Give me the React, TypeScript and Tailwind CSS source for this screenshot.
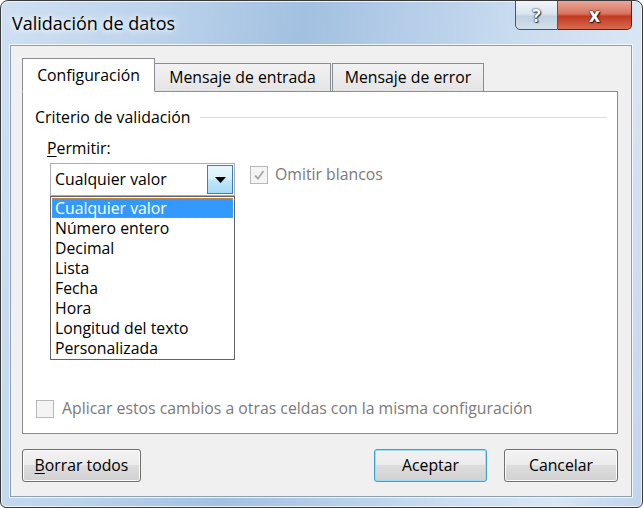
const FONT = "font-['Segoe_UI','Open_Sans','Noto_Sans',sans-serif]";

const ITEMS = [
  "Cualquier valor",
  "Número entero",
  "Decimal",
  "Lista",
  "Fecha",
  "Hora",
  "Longitud del texto",
  "Personalizada",
];

function CheckBox({ checked }: { checked?: boolean }) {
  return (
    <span className="flex h-[18px] w-[18px] shrink-0 items-center justify-center border border-[#b7b7b7] bg-[#f4f4f4]">
      {checked && (
        <svg width="12" height="12" viewBox="0 0 12 12">
          <path d="M2 6.5 L5 9.5 L10.5 2" fill="none" stroke="#a8a8a8" strokeWidth="1.8" />
        </svg>
      )}
    </span>
  );
}

function WinButton({
  children,
  primary,
  className,
}: {
  children: React.ReactNode;
  primary?: boolean;
  className?: string;
}) {
  return (
    <button
      className={
        "flex h-[33px] items-center justify-center rounded-[3px] border text-[15.8px] text-black bg-[linear-gradient(#f3f3f3_0%,#ebebeb_50%,#dddddd_50%,#d1d1d1_100%)] " +
        (primary
          ? "border-[#3c9fd6] shadow-[inset_0_0_0_1px_#9fdcf7] "
          : "border-[#707070] shadow-[inset_0_0_0_1px_#fcfcfc] ") +
        (className ?? "")
      }
    >
      {children}
    </button>
  );
}

export default function App() {
  return (
    <div
      className={`${FONT} flex h-[508px] w-[643px] flex-col overflow-hidden rounded-t-[8px] rounded-b-[6px] border border-[#3a3a3a] bg-[linear-gradient(100deg,#cfe0f2_0%,#bcd3ec_22%,#a2c0e0_42%,#b3cce8_55%,#cadcf0_72%,#d9e6f4_88%,#bfd4ec_100%)] shadow-[inset_0_0_0_1px_#eaf2fb]`}
    >
      {/* title bar */}
      <div className="flex h-[44px] shrink-0 items-start justify-between pl-[11px] pr-[10px]">
        <span className="pt-[10px] text-[18px] leading-[24px] text-black [text-shadow:0_0_6px_#ffffff,0_0_10px_#ffffff]">
          Validación de datos
        </span>
        <div className="flex h-[30px] -mt-px">
          <div className="flex w-[43px] items-center justify-center rounded-bl-[5px] border border-[#4a5866] bg-[linear-gradient(#f1f5f9_0%,#dbe5ee_45%,#c2d1df_55%,#d3e0ec_100%)] text-[17px] font-bold leading-none text-white [text-shadow:0_0_1px_#2a3440,0_0_2px_#2a3440,1px_1px_1px_#2a3440]">
            ?
          </div>
          <div className="flex w-[74px] items-center justify-center rounded-br-[5px] border border-l-0 border-[#4a2a24] bg-[linear-gradient(#e9a899_0%,#d9735f_45%,#c23a22_55%,#d76b4e_100%)] text-[19px] font-bold leading-none text-white [text-shadow:0_0_1px_#3a1008,0_0_2px_#3a1008,1px_1px_1px_#3a1008]">
            x
          </div>
        </div>
      </div>

      {/* client area */}
      <div className="mb-[10px] ml-[9px] mr-[10px] flex flex-1 flex-col border border-[#8d9fb2] bg-[#f0f0f0] pl-[11px] pr-[12px] pt-[12px] shadow-[0_0_0_1px_#f4f8fc]">
        {/* tabs */}
        <div className="relative z-10 -mb-px flex items-end text-[15.8px] text-black">
          <div className="flex h-[34px] w-[133px] items-center justify-center border border-b-white border-[#898c95] bg-white pt-[1px]">
            Configuración
          </div>
          <div className="flex h-[29px] w-[176px] items-center justify-center border border-l-0 border-[#898c95] bg-[linear-gradient(#f2f2f2,#e4e4e4)] pt-[1px]">
            Mensaje de entrada
          </div>
          <div className="ml-[1px] flex h-[29px] w-[152px] items-center justify-center border border-[#898c95] bg-[linear-gradient(#f2f2f2,#e4e4e4)] pt-[1px]">
            Mensaje de error
          </div>
        </div>

        {/* panel */}
        <div className="flex h-[343px] w-[596px] flex-col border border-[#898c95] bg-white pb-[15px] pl-[12px] pr-[10px] pt-[15px] text-[15.8px] text-black">
          <div className="flex items-center gap-[10px] leading-[20px]">
            <span>Criterio de validación</span>
            <span className="mt-[1px] h-px flex-1 bg-[#d5dfe5]" />
          </div>

          <div className="mt-[11px] pl-[12px] leading-[20px]">
            <span className="underline underline-offset-2">P</span>ermitir:
          </div>

          <div className="mt-[5px] flex items-start pl-[15px]">
            <div className="relative">
              <div className="flex h-[33px] w-[185px] items-stretch border border-[#abadb3] bg-white">
                <span className="flex flex-1 items-center pl-[4px] leading-none">Cualquier valor</span>
                <span className="m-[1px] flex w-[26px] items-center justify-center border border-[#3c7fb1] bg-[linear-gradient(#eaf6fd_0%,#d9f0fc_45%,#bee6fd_55%,#a7d9f5_100%)]">
                  <svg width="11" height="6" viewBox="0 0 11 6">
                    <path d="M0 0 H11 L5.5 6 Z" fill="#000" />
                  </svg>
                </span>
              </div>
              <ul className="absolute left-0 top-full w-[185px] border border-[#646464] bg-white p-px leading-[20px]">
                {ITEMS.map((it, i) => (
                  <li
                    key={it}
                    className={
                      i === 0
                        ? "h-[20px] border border-dotted border-[#c98a4a] bg-[#3399ff] pl-[2px] leading-[18px] text-white"
                        : "h-[20px] pl-[3px]"
                    }
                  >
                    {it}
                  </li>
                ))}
              </ul>
            </div>
            <label className="ml-[15px] mt-[2px] flex items-center gap-[7px] leading-[19px] text-[#7a7a7a]">
              <CheckBox checked />
              Omitir blancos
            </label>
          </div>

          <label className="mt-auto flex items-center gap-[8px] pl-[1px] leading-[19px] text-[#7a7a7a]">
            <CheckBox />
            Aplicar estos cambios a otras celdas con la misma configuración
          </label>
        </div>

        {/* buttons */}
        <div className="mt-[15px] flex w-[596px] items-center">
          <WinButton className="w-[119px]">
            <span>
              <span className="underline underline-offset-2">B</span>orrar todos
            </span>
          </WinButton>
          <WinButton primary className="ml-auto w-[113px]">
            Aceptar
          </WinButton>
          <WinButton className="ml-[17px] w-[114px]">Cancelar</WinButton>
        </div>
      </div>
    </div>
  );
}
